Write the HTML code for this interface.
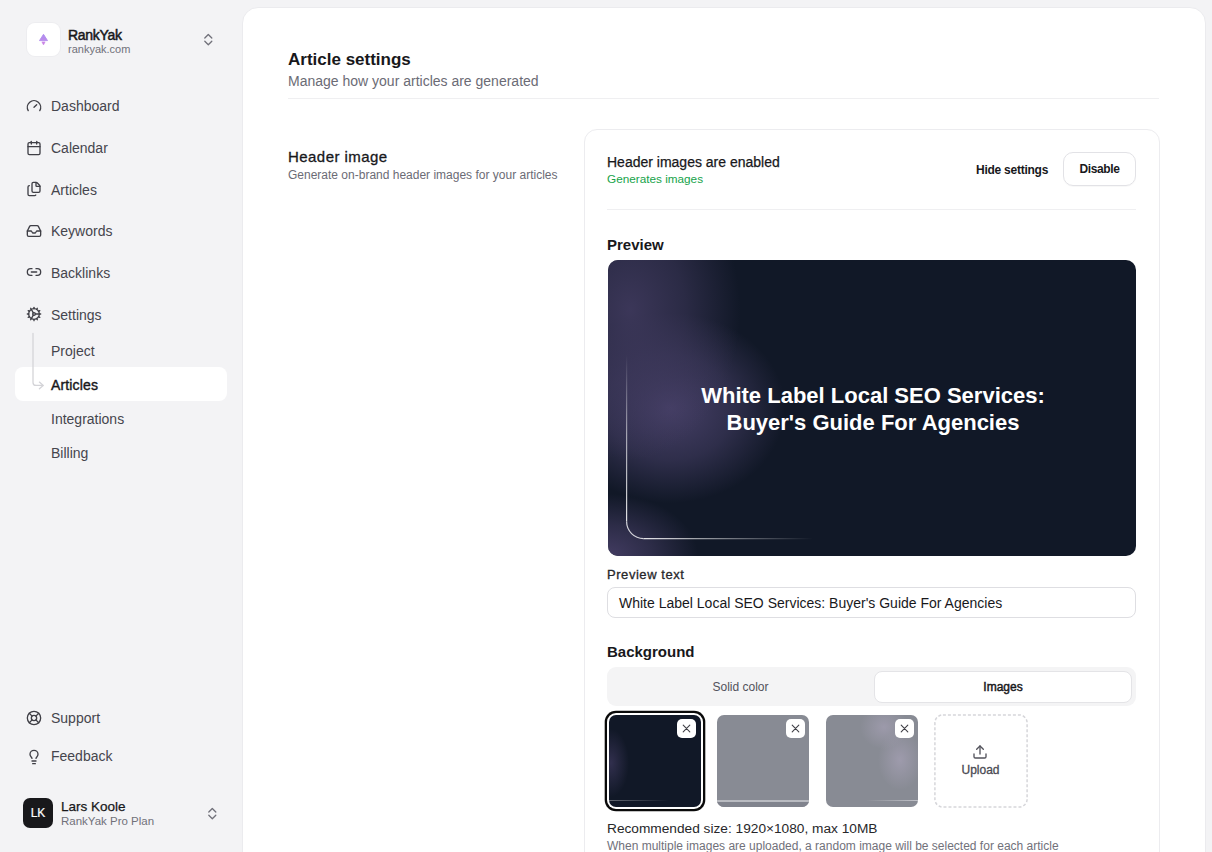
<!DOCTYPE html>
<html><head><meta charset="utf-8">
<style>
*{box-sizing:border-box;margin:0;padding:0}
html,body{width:1212px;height:852px;overflow:hidden}
body{background:#f3f3f5;font-family:"Liberation Sans",sans-serif;color:#18181b;position:relative}
.a{position:absolute;white-space:nowrap;line-height:1}
.nav{color:#45454d;font-size:14px}
svg.i{position:absolute;width:16px;height:16px;fill:none;stroke:#3f3f46;stroke-width:2;stroke-linecap:round;stroke-linejoin:round}
.panel{position:absolute;left:242px;top:7px;width:964px;height:900px;background:#fff;border:1px solid #ebebee;border-radius:16px}
.thumb{position:absolute;top:715px;width:92px;height:92px;border-radius:7px;overflow:hidden}
.xb{position:absolute;width:19px;height:19px;background:#fff;border-radius:5px}
.xb svg{position:absolute;left:4px;top:4px;width:11px;height:11px;fill:none;stroke:#3f3f46;stroke-width:1.1;stroke-linecap:round}
</style></head>
<body>
<!-- SIDEBAR -->
<div class="a" style="left:27px;top:23px;width:33px;height:33px;background:#fff;border-radius:8px;box-shadow:0 0 0 1px #ededf0"></div>
<svg class="a" style="left:27px;top:23px;width:33px;height:33px" viewBox="0 0 33 33"><defs><linearGradient id="lg" x1="0" y1="0" x2="0" y2="1"><stop offset="0" stop-color="#a88ef2"/><stop offset="1" stop-color="#c08ae8"/></linearGradient></defs><path d="M16.5 11.3 L20.5 17.6 L12.5 17.6 Z" fill="url(#lg)" stroke="#b28cee" stroke-width="0.9" stroke-linejoin="round"/><path d="M14.9 18.9 L18.1 18.9 L16.5 21.9 Z" fill="#c985e6" stroke="#c985e6" stroke-width="0.6" stroke-linejoin="round"/></svg>
<div class="a" style="left:68px;top:28px;font-size:14px;letter-spacing:-0.3px;-webkit-text-stroke:0.5px #18181b;color:#18181b">RankYak</div>
<div class="a" style="left:68px;top:44px;font-size:11px;color:#71717a">rankyak.com</div>
<svg class="a" style="left:200px;top:30px;width:16px;height:19px" viewBox="0 0 16 19" fill="none" stroke="#71717a" stroke-width="1.3" stroke-linecap="round" stroke-linejoin="round"><path d="M4.8 8 L8.3 4.5 L11.8 8"/><path d="M4.8 11.3 L8.3 14.8 L11.8 11.3"/></svg>

<svg class="i" style="left:26px;top:98px" viewBox="0 0 24 24"><path d="m12 14 4-4"/><path d="M3.34 19a10 10 0 1 1 17.32 0"/></svg>
<div class="a nav" style="left:51px;top:99px">Dashboard</div>
<svg class="i" style="left:26px;top:140px" viewBox="0 0 24 24"><path d="M8 2v4"/><path d="M16 2v4"/><rect width="18" height="18" x="3" y="4" rx="2"/><path d="M3 10h18"/></svg>
<div class="a nav" style="left:51px;top:141px">Calendar</div>
<svg class="i" style="left:26px;top:181px" viewBox="0 0 24 24"><path d="M15 2h-4a2 2 0 0 0-2 2v11a2 2 0 0 0 2 2h8a2 2 0 0 0 2-2V8"/><path d="M16.706 2.706A2.4 2.4 0 0 0 15 2v5a1 1 0 0 0 1 1h5a2.4 2.4 0 0 0-.706-1.706z"/><path d="M5 7a2 2 0 0 0-2 2v11a2 2 0 0 0 2 2h8a2 2 0 0 0 1.732-1"/></svg>
<div class="a nav" style="left:51px;top:183px">Articles</div>
<svg class="i" style="left:26px;top:223px" viewBox="0 0 24 24"><polyline points="22 12 16 12 14 15 10 15 8 12 2 12"/><path d="M5.45 5.11 2 12v6a2 2 0 0 0 2 2h16a2 2 0 0 0 2-2v-6l-3.45-6.89A2 2 0 0 0 16.76 4H7.24a2 2 0 0 0-1.79 1.11z"/></svg>
<div class="a nav" style="left:51px;top:224px">Keywords</div>
<svg class="i" style="left:26px;top:264px" viewBox="0 0 24 24"><path d="M9 17H7A5 5 0 0 1 7 7h2"/><path d="M15 7h2a5 5 0 1 1 0 10h-2"/><line x1="8" x2="16" y1="12" y2="12"/></svg>
<div class="a nav" style="left:51px;top:266px">Backlinks</div>
<svg class="i" style="left:26px;top:306px" viewBox="0 0 24 24"><path d="M12 20a8 8 0 1 0 0-16 8 8 0 0 0 0 16Z"/><path d="M12 14a2 2 0 1 0 0-4 2 2 0 0 0 0 4Z"/><path d="M12 2v2"/><path d="M12 22v-2"/><path d="m17 20.66-1-1.73"/><path d="M11 10.27 7 3.34"/><path d="m20.66 17-1.73-1"/><path d="m3.34 7 1.73 1"/><path d="M14 12h8"/><path d="M2 12h2"/><path d="m20.66 7-1.73 1"/><path d="m3.34 17 1.73-1"/><path d="m17 3.34-1 1.73"/><path d="m11 13.73-4 6.93"/></svg>
<div class="a nav" style="left:51px;top:308px">Settings</div>

<div class="a" style="left:15px;top:367px;width:212px;height:34px;background:#fff;border-radius:8px"></div>
<svg class="a" style="left:28px;top:330px;width:20px;height:62px" viewBox="0 0 20 62" fill="none" stroke="#d4d4d8" stroke-width="1.3" stroke-linecap="round" stroke-linejoin="round"><path d="M5 3.4 V52.4 A3 3 0 0 0 8 55.4 H15"/><path d="M11.4 52.1 L15.2 55.4 L11.4 58.7"/></svg>
<div class="a nav" style="left:51px;top:344px">Project</div>
<div class="a nav" style="left:51px;top:378px;color:#18181b;letter-spacing:0.15px;-webkit-text-stroke:0.4px #18181b">Articles</div>
<div class="a nav" style="left:51px;top:412px">Integrations</div>
<div class="a nav" style="left:51px;top:446px">Billing</div>

<svg class="i" style="left:26px;top:710px" viewBox="0 0 24 24"><circle cx="12" cy="12" r="10"/><path d="m4.93 4.93 4.24 4.24"/><path d="m14.83 9.17 4.24-4.24"/><path d="m14.83 14.83 4.24 4.24"/><path d="m9.17 14.83-4.24 4.24"/><circle cx="12" cy="12" r="4"/></svg>
<div class="a nav" style="left:51px;top:711px">Support</div>
<svg class="i" style="left:26px;top:749px" viewBox="0 0 24 24"><path d="M15 14c.2-1 .7-1.7 1.5-2.5 1-.9 1.5-2.2 1.5-3.5A6 6 0 0 0 6 8c0 1 .2 2.2 1.5 3.5.7.7 1.3 1.5 1.5 2.5"/><path d="M9 18h6"/><path d="M10 22h4"/></svg>
<div class="a nav" style="left:51px;top:749px">Feedback</div>

<div class="a" style="left:23px;top:798px;width:30px;height:30px;background:#18181b;border-radius:7px;color:#fff;font-size:12px;text-align:center;line-height:31px;-webkit-text-stroke:0.2px #fff">LK</div>
<div class="a" style="left:61px;top:800px;font-size:13.5px;color:#18181b;-webkit-text-stroke:0.25px #18181b">Lars Koole</div>
<div class="a" style="left:61px;top:816px;font-size:11.5px;color:#71717a">RankYak Pro Plan</div>
<svg class="a" style="left:204px;top:804px;width:16px;height:19px" viewBox="0 0 16 19" fill="none" stroke="#71717a" stroke-width="1.3" stroke-linecap="round" stroke-linejoin="round"><path d="M4.8 8 L8.3 4.5 L11.8 8"/><path d="M4.8 11.3 L8.3 14.8 L11.8 11.3"/></svg>

<!-- MAIN PANEL -->
<div class="panel"></div>
<div class="a" style="left:288px;top:51px;font-size:17px;font-weight:700">Article settings</div>
<div class="a" style="left:288px;top:74px;font-size:14px;color:#6b6b75">Manage how your articles are generated</div>
<div class="a" style="left:288px;top:98px;width:871px;height:1px;background:#efeff1"></div>

<div class="a" style="left:288px;top:149px;font-size:15px;letter-spacing:0.45px;-webkit-text-stroke:0.3px #18181b">Header image</div>
<div class="a" style="left:288px;top:169px;font-size:12px;color:#6b6b75">Generate on-brand header images for your articles</div>

<div class="a" style="left:584px;top:129px;width:576px;height:800px;border:1px solid #ececef;border-radius:13px"></div>
<div class="a" style="left:607px;top:155px;font-size:14px;-webkit-text-stroke:0.25px #18181b">Header images are enabled</div>
<div class="a" style="left:607px;top:173px;font-size:11.75px;color:#16a34a">Generates images</div>
<div class="a" style="left:976px;top:164px;font-size:12px;font-weight:700;letter-spacing:-0.25px">Hide settings</div>
<div class="a" style="left:1063px;top:152px;width:73px;height:34px;border:1px solid #e2e2e6;border-radius:10px;box-shadow:0 1px 1px rgba(0,0,0,0.03);font-size:12px;font-weight:700;letter-spacing:-0.4px;text-align:center;line-height:32px">Disable</div>
<div class="a" style="left:607px;top:209px;width:529px;height:1px;background:#efeff1"></div>

<div class="a" style="left:607px;top:237px;font-size:15px;font-weight:700">Preview</div>
<div class="a" style="left:608px;top:260px;width:528px;height:296px;background:#111827;border-radius:10px;overflow:hidden">
  <div class="a" style="left:0;top:0;width:528px;height:296px;background:radial-gradient(ellipse 110px 150px at 22px 50px,rgba(64,58,94,0.9) 0%,rgba(64,58,94,0.55) 50%,rgba(64,58,94,0) 100%),radial-gradient(ellipse 115px 95px at 62px 148px,rgba(76,68,110,0.9) 0%,rgba(76,68,110,0.5) 55%,rgba(76,68,110,0) 100%),radial-gradient(ellipse 90px 62px at 0px 296px,rgba(72,64,104,0.9) 0%,rgba(72,64,104,0.5) 50%,rgba(72,64,104,0) 100%)"></div>
  <svg class="a" style="left:0;top:0;width:528px;height:296px" viewBox="0 0 528 296" fill="none"><defs><linearGradient id="lv" gradientUnits="userSpaceOnUse" x1="0" y1="95" x2="0" y2="270"><stop offset="0" stop-color="#fff" stop-opacity="0"/><stop offset="0.45" stop-color="#fff" stop-opacity="0.55"/><stop offset="1" stop-color="#fff" stop-opacity="0.9"/></linearGradient><linearGradient id="lh" gradientUnits="userSpaceOnUse" x1="30" y1="0" x2="205" y2="0"><stop offset="0" stop-color="#fff" stop-opacity="0.9"/><stop offset="1" stop-color="#fff" stop-opacity="0"/></linearGradient></defs><path d="M18.6 95 V261.6" stroke="url(#lv)" stroke-width="1.2"/><path d="M18.6 261.6 A17 17 0 0 0 35.6 278.6" stroke="#e5e5ea" stroke-opacity="0.9" stroke-width="1.2"/><path d="M35.6 278.6 H205" stroke="url(#lh)" stroke-width="1.2"/></svg>
  <div class="a" style="left:1px;top:122px;width:528px;text-align:center;color:#fff;font-size:22px;font-weight:700;line-height:27px">White Label Local SEO Services:<br>Buyer's Guide For Agencies</div>
</div>

<div class="a" style="left:607px;top:568px;font-size:13px;letter-spacing:0.55px;color:#27272a;-webkit-text-stroke:0.3px #27272a">Preview text</div>
<div class="a" style="left:607px;top:587px;width:529px;height:31px;border:1px solid #dedee2;border-radius:8px"></div>
<div class="a" style="left:619px;top:596px;font-size:14px;color:#18181b">White Label Local SEO Services: Buyer's Guide For Agencies</div>

<div class="a" style="left:607px;top:644px;font-size:15px;font-weight:700">Background</div>
<div class="a" style="left:607px;top:667px;width:529px;height:39px;background:#f4f4f5;border-radius:9px"></div>
<div class="a" style="left:607px;top:681px;width:267px;text-align:center;font-size:12px;color:#52525b">Solid color</div>
<div class="a" style="left:874px;top:671px;width:258px;height:32px;background:#fff;border:1px solid #e4e4e7;border-radius:8px"></div>
<div class="a" style="left:874px;top:681px;width:258px;text-align:center;font-size:12px;-webkit-text-stroke:0.45px #18181b">Images</div>

<div class="thumb" style="left:608.5px;background:#111827;box-shadow:0 0 0 2px #fff,0 0 0 4.3px #0a0a0a"><div class="a" style="left:0;top:0;width:93px;height:92px;background:radial-gradient(ellipse 18px 34px at 2px 48px,rgba(80,70,115,0.5),rgba(80,70,115,0))"></div><div class="a" style="left:0;top:85px;width:60px;height:1px;background:linear-gradient(90deg,rgba(255,255,255,0.35),rgba(255,255,255,0))"></div></div>
<div class="thumb" style="left:717px;background:#888b94"><div class="a" style="left:0;top:85px;width:93px;height:1.5px;background:#b9bbc1"></div><div class="a" style="left:0;top:86.5px;width:93px;height:6px;background:#80838d"></div></div>
<div class="thumb" style="left:825.5px;background:#888b94"><div class="a" style="left:0;top:0;width:93px;height:92px;background:radial-gradient(ellipse 24px 22px at 58px 12px,rgba(165,160,180,0.7),rgba(165,160,180,0)),radial-gradient(ellipse 22px 30px at 74px 45px,rgba(165,160,180,0.75),rgba(165,160,180,0))"></div><div class="a" style="left:40px;top:85px;width:53px;height:1px;background:linear-gradient(90deg,rgba(220,220,225,0),rgba(220,220,225,0.7))"></div></div>
<svg class="a" style="left:934px;top:714px;width:94px;height:94px" viewBox="0 0 94 94"><rect x="0.9" y="0.9" width="92.2" height="92.2" rx="8" fill="none" stroke="#d6d6da" stroke-width="1.5" stroke-dasharray="3 2"/></svg>
<div class="xb" style="left:677px;top:719px"><svg viewBox="0 0 11 11"><path d="M2.2 2.2 8.8 8.8M8.8 2.2 2.2 8.8"/></svg></div>
<div class="xb" style="left:786px;top:719px"><svg viewBox="0 0 11 11"><path d="M2.2 2.2 8.8 8.8M8.8 2.2 2.2 8.8"/></svg></div>
<div class="xb" style="left:895px;top:719px"><svg viewBox="0 0 11 11"><path d="M2.2 2.2 8.8 8.8M8.8 2.2 2.2 8.8"/></svg></div>
<svg class="a" style="left:972px;top:744px;width:16px;height:16px" viewBox="0 0 24 24" fill="none" stroke="#52525b" stroke-width="2" stroke-linecap="round" stroke-linejoin="round"><path d="M21 15v4a2 2 0 0 1-2 2H5a2 2 0 0 1-2-2v-4"/><polyline points="17 8 12 3 7 8"/><line x1="12" x2="12" y1="3" y2="15"/></svg>
<div class="a" style="left:934px;top:764px;width:93px;text-align:center;font-size:12px;color:#4a4a52;-webkit-text-stroke:0.3px #4a4a52">Upload</div>

<div class="a" style="left:607px;top:822px;font-size:13.7px;color:#27272a">Recommended size: 1920×1080, max 10MB</div>
<div class="a" style="left:607px;top:840px;font-size:12px;color:#71717a">When multiple images are uploaded, a random image will be selected for each article</div>
</body></html>
